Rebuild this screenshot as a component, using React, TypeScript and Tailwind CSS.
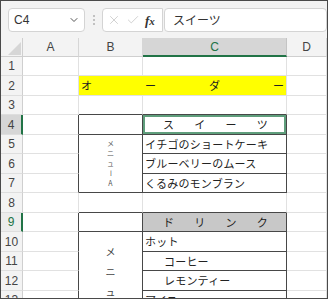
import { X, Check, ChevronDown } from 'lucide-react'

// cell border presets
const grid = 'border-r border-b border-[#e1e1e1] bg-white'
const box = 'border-r border-b border-[#474747] bg-white'
const edgeRight = 'border-r border-b border-r-[#474747] border-b-[#e1e1e1] bg-white'
const edgeBottom = 'border-r border-b border-r-[#e1e1e1] border-b-[#474747] bg-white'
const rowHead =
  'flex items-center justify-center border-r border-b border-r-[#cfcfcf] border-b-[#dedede] bg-[#f3f3f3] text-[12px] text-[#444]'
const colHead =
  'flex items-center justify-center border-r border-b border-r-[#d6d6d6] border-b-[#cfcfcf] bg-[#f3f3f3] text-[12px] text-[#444]'
const jp = "font-['Noto_Sans_CJK_JP',sans-serif] text-[11px] tracking-[0.2px] text-[#222]"

function RowHead({ n }: { n: number }) {
  return <div className={rowHead}>{n}</div>
}

export default function App() {
  return (
    <div className="w-[328px] h-[299px] overflow-hidden border border-[#4a4a4a] bg-[#f3f3f3] font-['Liberation_Sans',sans-serif]">
      {/* formula bar */}
      <div className="h-[37px] flex items-start pt-[7px] pl-[7px]">
        <div className="w-[77px] h-[24px] rounded-[4px] border border-[#d4d4d4] bg-white flex items-center justify-between pl-[5px] pr-[4px]">
          <span className="text-[12px] text-[#333]">C4</span>
          <ChevronDown className="w-[12px] h-[12px] text-[#555]" strokeWidth={2} />
        </div>
        <div className="w-[17px] h-[24px] flex flex-col items-center justify-center gap-[2px]">
          <span className="w-[2px] h-[2px] rounded-full bg-[#b0b0b0]" />
          <span className="w-[2px] h-[2px] rounded-full bg-[#b0b0b0]" />
          <span className="w-[2px] h-[2px] rounded-full bg-[#b0b0b0]" />
        </div>
        <div className="w-[61px] h-[24px] rounded-l-[4px] border border-[#d4d4d4] bg-white flex items-center pl-[4px] gap-[5px]">
          <X className="w-[14px] h-[14px] text-[#c4c4c4]" strokeWidth={1.3} />
          <Check className="w-[14px] h-[14px] text-[#c4c4c4]" strokeWidth={1.3} />
          <span className="font-['Liberation_Serif',serif] italic font-bold text-[13px] text-[#333] leading-none">
            f<span className="text-[11px]">x</span>
          </span>
        </div>
        <div className="ml-[1px] flex-1 h-[24px] rounded-[4px] border border-[#d4d4d4] bg-white flex items-center pl-[8px]">
          <span className="font-['Noto_Sans_CJK_JP',sans-serif] text-[12px] text-[#333]">スイーツ</span>
        </div>
      </div>

      {/* sheet */}
      <div className="grid grid-cols-[22px_56px_64px_144px_40px] grid-rows-[19px_19px_20px_19px_20px_19px_20px_19px_20px_19px_20px_19px_20px_19px]">
        {/* column headers */}
        <div className="relative border-r border-b border-r-[#cfcfcf] border-b-[#cfcfcf] bg-[#f3f3f3]">
          <svg className="absolute right-[1px] bottom-[1px]" width="13" height="13" viewBox="0 0 13 13">
            <polygon points="13,0 13,13 0,13" fill="#d6d6d6" />
          </svg>
        </div>
        <div className={colHead}>A</div>
        <div className={colHead}>B</div>
        <div className="flex items-center justify-center border-r border-r-[#c4c4c4] border-b-2 border-b-[#217346] bg-[#d6d6d6] text-[12px] text-[#217346]">
          C
        </div>
        <div className={colHead}>D</div>

        {/* row 1 */}
        <RowHead n={1} />
        <div className={grid} />
        <div className={grid} />
        <div className={grid} />
        <div className={grid} />

        {/* row 2 */}
        <RowHead n={2} />
        <div className={grid} />
        <div className="col-span-2 flex items-center justify-between px-[2px] border-r border-b border-[#e1e1e1] bg-[#ffff00] font-['Noto_Sans_CJK_JP',sans-serif] text-[11px] text-[#222]">
          <span>オ</span>
          <span>ー</span>
          <span>ダ</span>
          <span>ー</span>
        </div>
        <div className={grid} />

        {/* row 3 */}
        <RowHead n={3} />
        <div className={grid} />
        <div className={edgeBottom} />
        <div className={edgeBottom} />
        <div className={grid} />

        {/* row 4 */}
        <div className="flex items-center justify-center border-r-2 border-b border-r-[#217346] border-b-[#dedede] bg-[#d6d6d6] text-[12px] text-[#444]">
          4
        </div>
        <div className={edgeRight} />
        <div className={box} />
        <div className={`${box} shadow-[inset_0_0_0_2px_#5f9e7c] flex items-center justify-between pl-[20px] pr-[18px] ${jp}`}>
          <span>ス</span>
          <span>イ</span>
          <span>ー</span>
          <span>ツ</span>
        </div>
        <div className={grid} />

        {/* rows 5-7 */}
        <RowHead n={5} />
        <div className={edgeRight} />
        <div className={`${box} row-span-3 flex flex-col items-center justify-center gap-[3px] font-['Noto_Sans_CJK_JP',sans-serif] text-[7px] leading-[7px] text-[#555]`}>
          <span>メ</span>
          <span>ニ</span>
          <span>ュ</span>
          <span className="[writing-mode:vertical-rl]">ー</span>
          <span>A</span>
        </div>
        <div className={`${box} flex items-center pl-[2px] ${jp}`}>イチゴのショートケーキ</div>
        <div className={grid} />

        <RowHead n={6} />
        <div className={edgeRight} />
        <div className={`${box} flex items-center pl-[2px] ${jp}`}>ブルーベリーのムース</div>
        <div className={grid} />

        <RowHead n={7} />
        <div className={edgeRight} />
        <div className={`${box} flex items-center pl-[2px] ${jp}`}>くるみのモンブラン</div>
        <div className={grid} />

        {/* row 8 */}
        <RowHead n={8} />
        <div className={grid} />
        <div className={edgeBottom} />
        <div className={edgeBottom} />
        <div className={grid} />

        {/* row 9 */}
        <div className="flex items-center justify-center border-r-2 border-b border-r-[#217346] border-b-[#dedede] bg-[#ececec] text-[12px] text-[#217346]">
          9
        </div>
        <div className={edgeRight} />
        <div className={box} />
        <div className={`border-r border-b border-[#474747] bg-[#c8c8c8] flex items-center justify-between pl-[20px] pr-[18px] ${jp}`}>
          <span>ド</span>
          <span>リ</span>
          <span>ン</span>
          <span>ク</span>
        </div>
        <div className={grid} />

        {/* rows 10-13 */}
        <RowHead n={10} />
        <div className={edgeRight} />
        <div className={`${box} row-span-4 flex flex-col items-center pt-[9px] font-['Noto_Sans_CJK_JP',sans-serif] text-[10px] text-[#444]`}>
          <span className="h-[20px] flex items-center">メ</span>
          <span className="h-[20px] flex items-center">ニ</span>
          <span className="h-[20px] flex items-center">ュ</span>
        </div>
        <div className={`${box} flex items-center pl-[2px] ${jp}`}>ホット</div>
        <div className={grid} />

        <RowHead n={11} />
        <div className={edgeRight} />
        <div className={`${box} flex items-center pl-[21px] ${jp}`}>コーヒー</div>
        <div className={grid} />

        <RowHead n={12} />
        <div className={edgeRight} />
        <div className={`${box} flex items-center pl-[21px] ${jp}`}>レモンティー</div>
        <div className={grid} />

        <RowHead n={13} />
        <div className={edgeRight} />
        <div className={`${box} flex items-center pl-[2px] ${jp}`}>アイス</div>
        <div className={grid} />
      </div>
    </div>
  )
}
